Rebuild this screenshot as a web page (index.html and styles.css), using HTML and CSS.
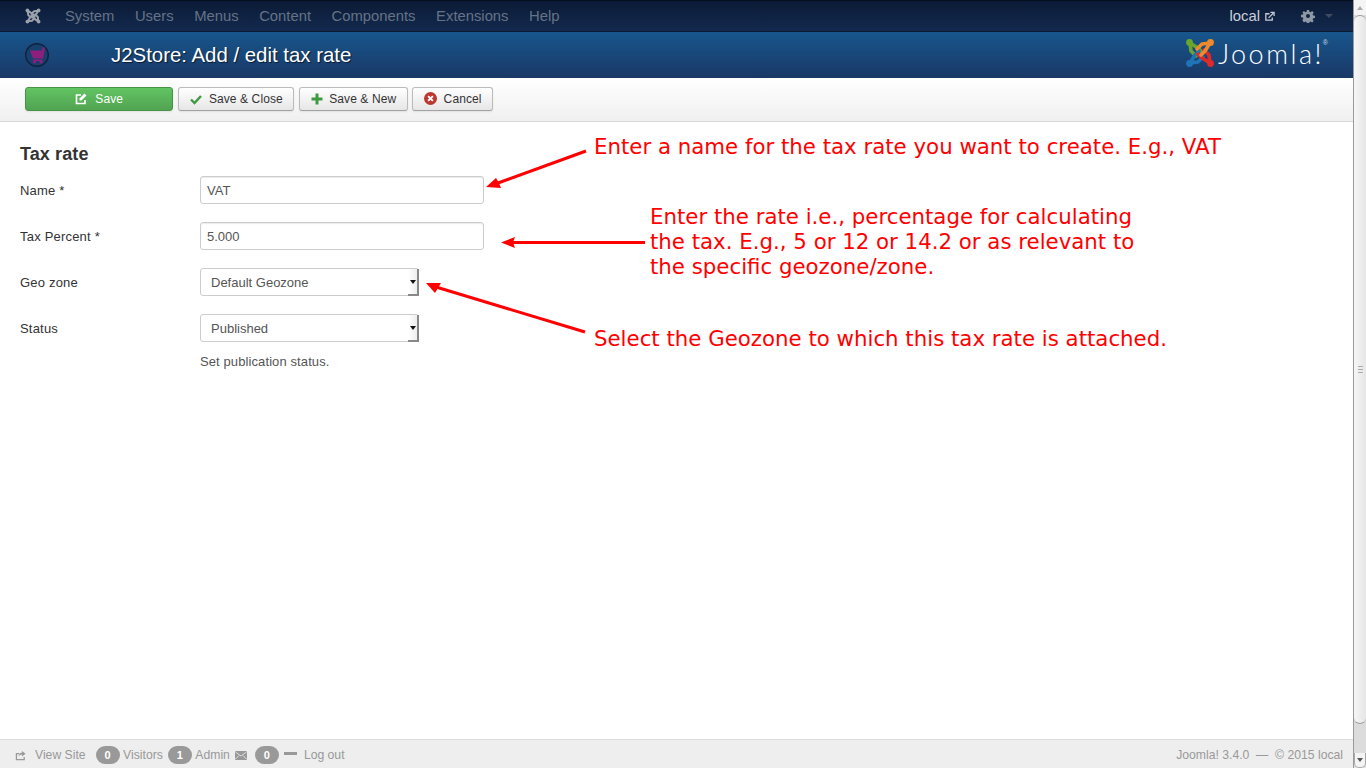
FILE: index.html
```html
<!DOCTYPE html>
<html lang="en">
<head>
<meta charset="utf-8">
<title>J2Store: Add / edit tax rate</title>
<link rel="stylesheet" href="styles.css">
</head>
<body>
<div class="app">
  <div class="main">
    <nav class="navbar">
      <svg class="brand" viewBox="0 0 30 30" width="16" height="16"><g fill="none" stroke="#9aa1ab" stroke-width="3.800" stroke-linecap="round" stroke-linejoin="round"><path d="M11 18 6 13 5 5 13 10 17 14"/><path d="M12 11 17 6 25 5 20 13 16 17"/><path d="M19 12 24 17 25 25 17 20 13 16"/><path d="M18 19 13 24 5 25 10 17 14 13"/></g><g fill="#9aa1ab"><circle cx="4.500" cy="4.500" r="3.500"/><circle cx="25.500" cy="4.500" r="3.500"/><circle cx="25.500" cy="25.500" r="3.500"/><circle cx="4.500" cy="25.500" r="3.500"/></g></svg>
      <ul class="menu">
        <li>System</li><li>Users</li><li>Menus</li><li>Content</li><li>Components</li><li>Extensions</li><li>Help</li>
      </ul>
      <div class="nav-right">
        <span class="local">local</span>
        <svg class="ext" viewBox="0 0 12 12" width="11" height="11"><path d="M9 7v3H2V3h4" fill="none" stroke="#c5ccd6" stroke-width="1.400"/><path d="M5 7.500 10 2.500M7 1.500h4v4" fill="none" stroke="#c5ccd6" stroke-width="1.400"/></svg>
        <svg class="gear" viewBox="-1 0 16 14" width="14" height="14"><path fill-rule="evenodd" fill="#8f98a5" d="M5.700 0h2.600l.3 2 1.400.6L11.700 1.400l1.800 1.800-1.200 1.700.6 1.400 2.100.4v2.600l-2.100.3-.6 1.400 1.200 1.700-1.800 1.800-1.700-1.200-1.400.6-.3 2.100H5.700l-.3-2.100-1.400-.6-1.700 1.200L.5 11.700l1.200-1.700-.6-1.400L-1 8.300V5.700l2.100-.3.600-1.400L.5 3.200l1.800-1.800L4 2.600l1.400-.6zM7 4.700a2.300 2.300 0 1 0 0 4.600 2.300 2.300 0 0 0 0-4.600z"/></svg>
        <span class="caret"></span>
      </div>
    </nav>
    <header class="head">
      <svg class="cart-badge" viewBox="0 0 24 24" width="24" height="24"><circle cx="12" cy="12" r="11.300" fill="#17406e" stroke="#10223c" stroke-width="1.400"/><path fill="#8e1f7c" d="M5 7.500h12l.6-3H20l-2 11H8zM8 16.500h9.500V18H8z"/><circle cx="9.500" cy="19" r="1.600" fill="#8e1f7c"/><circle cx="16" cy="19" r="1.600" fill="#8e1f7c"/></svg>
      <h1 class="title">J2Store: Add / edit tax rate</h1>
      <div class="logo">
        <svg viewBox="0 0 30 30" width="30" height="30"><g fill="none" stroke-width="3.600" stroke-linecap="round" stroke-linejoin="round"><path stroke="#6aa62c" d="M11 18 6 13 5 5 13 10 17 14"/><path stroke="#1f73b7" d="M18 19 13 24 5 25 10 17 14 13"/><path stroke="#e02a2a" d="M19 12 24 17 25 25 17 20 13 16"/><path stroke="#ef8a2c" d="M12 11 17 6 25 5 20 13 16 17"/></g><circle cx="4.500" cy="4.500" r="3.400" fill="#6aa62c"/><circle cx="25.500" cy="4.500" r="3.400" fill="#ef8a2c"/><circle cx="25.500" cy="25.500" r="3.400" fill="#e02a2a"/><circle cx="4.500" cy="25.500" r="3.400" fill="#1f73b7"/></svg>
        <span class="logo-text">Joomla!</span><span class="reg">®</span>
      </div>
    </header>
    <div class="toolbar">
      <button class="btn btn-save"><svg viewBox="0 0 12 12" width="12" height="12"><path d="M10 7v3.500H1.500V2H6" fill="none" stroke="#fff" stroke-width="1.600"/><path d="M4.500 5.500 9.500.500 11.500 2.500 6.500 7.500H4.500z" fill="#fff"/></svg><span>Save</span></button>
      <button class="btn"><svg viewBox="0 0 12 12" width="12" height="12"><path d="M1 6.500 4.500 10 11 3" fill="none" stroke="#3f9a42" stroke-width="2.400"/></svg><span>Save &amp; Close</span></button>
      <button class="btn"><svg viewBox="0 0 12 12" width="12" height="12"><path d="M6 .500v11M.500 6h11" fill="none" stroke="#3f9a42" stroke-width="3"/></svg><span>Save &amp; New</span></button>
      <button class="btn"><svg viewBox="0 0 12 12" width="13" height="13"><circle cx="6" cy="6" r="6" fill="#bd362f"/><path d="M3.800 3.800 8.200 8.200M8.200 3.800 3.800 8.200" stroke="#fff" stroke-width="1.800"/></svg><span>Cancel</span></button>
    </div>
    <section class="content">
      <h2 class="legend">Tax rate</h2>
      <div class="row"><label class="lbl">Name *</label><div class="input">VAT</div></div>
      <div class="row"><label class="lbl">Tax Percent *</label><div class="input">5.000</div></div>
      <div class="row"><label class="lbl">Geo zone</label><div class="select">Default Geozone<span class="sel-btn"></span></div></div>
      <div class="row row-last"><label class="lbl">Status</label><div class="select">Published<span class="sel-btn"></span></div></div>
      <p class="help">Set publication status.</p>

      <div class="note note-1">Enter a name for the tax rate you want to create. E.g., VAT</div>
      <div class="note note-2">Enter the rate i.e., percentage for calculating<br>the tax. E.g., 5 or 12 or 14.2 or as relevant to<br>the specific geozone/zone.</div>
      <div class="note note-3">Select the Geozone to which this tax rate is attached.</div>
      <svg class="arrows" viewBox="0 0 700 260" width="700" height="260">
        <g stroke="#f00" stroke-width="3" fill="#f00">
          <path d="M166 29 L78 61" fill="none"/>
          <path d="M66 65 L76 56 L79 61 L81 66 Z" stroke="none"/>
          <path d="M225 120.500 H90" fill="none"/>
          <path d="M81 120.500 L95 115 L93 120.500 L95 126 Z" stroke="none"/>
          <path d="M165 210 L16 165" fill="none"/>
          <path d="M6 161 L21 161 L18 166 L15 171 Z" stroke="none"/>
        </g>
      </svg>
    </section>
    <footer class="foot">
      <svg class="f-ic" viewBox="0 0 12 12" width="12" height="11"><path d="M9.500 7.500V10.500H1V4H4" fill="none" stroke="#999" stroke-width="1.400"/><path d="M7 1v2C4.500 3 3.500 4.500 3.500 7 4.500 5.500 5.500 5 7 5v2l4-3z" fill="#999"/></svg>
      <span class="f-link f-view">View Site</span>
      <span class="badge">0</span><span class="f-link">Visitors</span>
      <span class="badge">1</span><span class="f-link">Admin</span>
      <svg class="f-mail" viewBox="0 0 12 9" width="12" height="9"><rect width="12" height="9" rx="1" fill="#999"/><path d="M.5 1 6 5l5.500-4M.5 8 4 4.500M11.500 8 8 4.500" fill="none" stroke="#eee" stroke-width=".8"/></svg>
      <span class="badge">0</span>
      <span class="f-dash"></span>
      <span class="f-link f-out">Log out</span>
      <span class="f-copy">Joomla! 3.4.0 &nbsp;— &nbsp;© 2015 local</span>
    </footer>
  </div>
  <aside class="scrollbar">
    <div class="sb-btn sb-up"><span class="up"></span></div>
    <div class="sb-track"><div class="sb-thumb"><span class="grip"></span></div></div>
    <div class="sb-btn sb-down"><span class="down"></span></div>
  </aside>
</div>
</body>
</html>
```
FILE: styles.css
```css
* { box-sizing: border-box; }
html, body { margin: 0; height: 100%; overflow: hidden; }
body { font-family: "Liberation Sans", Arial, sans-serif; font-size: 13px; color: #333; background: #fff; }
.app { display: flex; height: 768px; }
.main { flex: 1; min-width: 0; display: flex; flex-direction: column; }

.navbar { height: 32px; display: flex; align-items: center; padding: 0 16px 0 25px; background: linear-gradient(#0b1b36, #13294e); border-top: 1px solid #05101f; border-bottom: 1px solid #0c1b33; }
.brand { display: block; flex: none; }
.menu { list-style: none; margin: 0 0 0 24px; padding: 0; display: flex; gap: 20.600px; font-size: 14.800px; color: #667387; }
.nav-right { margin-left: auto; display: flex; align-items: center; color: #c9d0da; font-size: 14.800px; }
.ext { margin-left: 4px; }
.gear { margin-left: 26px; }
.caret { margin-left: 10px; margin-right: 4px; border: 4px solid transparent; border-top-color: #3f4c60; border-bottom: 0; }

.head { height: 46px; display: flex; align-items: center; padding: 0 25px; background: linear-gradient(#17568c, #1a3867); position: relative; }
.cart-badge { display: block; flex: none; }
.title { margin: 0 0 0 62px; font-size: 20.400px; font-weight: 400; color: #fff; text-shadow: 1px 1px 1px rgba(0,0,0,.6); }
.logo { margin-left: auto; display: flex; align-items: center; color: #fff; margin-top: -4px; }
.logo svg { display: block; margin-right: 3px; }
.logo-text { font-family: Lato, sans-serif; font-weight: 300; font-size: 27px; letter-spacing: 2.500px; }
.reg { font-size: 7px; align-self: flex-start; color: #cfd8e3; margin: 2px 0 0 -1px; }

.toolbar { height: 44px; display: flex; align-items: center; gap: 4.400px; padding: 0 25px 2px; background: linear-gradient(#fff, #f0f0f0); border-bottom: 1px solid #d8d8d8; }
.btn { height: 24px; padding: 0 10.500px 0 11px; display: flex; align-items: center; justify-content: center; gap: 6.500px; font-family: inherit; font-size: 12px; letter-spacing: .1px; color: #333; background: linear-gradient(#fff, #e6e6e6); border: 1px solid #bbb; border-bottom-color: #a2a2a2; border-radius: 3px; box-shadow: 0 1px 2px rgba(0,0,0,.08); }
.btn svg { display: block; flex: none; }
.btn-save { width: 148px; margin-right: 1px; color: #fff; background: linear-gradient(#62c462, #51a351); border-color: #479447; gap: 8px; }

.content { flex: 1; padding: 22px 20px 0; position: relative; }
.legend { margin: 0 0 12px; font-size: 18px; letter-spacing: .1px; line-height: 20px; font-weight: 700; color: #333; }
.row { display: flex; align-items: center; height: 28px; margin-bottom: 18px; }
.row-last { margin-bottom: 0; }
.lbl { width: 180px; font-size: 13px; letter-spacing: .2px; color: #333; }
.input { width: 284px; height: 28px; padding: 0 6px; display: flex; align-items: center; font-size: 13px; color: #555; background: #fff; border: 1px solid #ccc; border-radius: 3px; box-shadow: inset 0 1px 1px rgba(0,0,0,.08); }
.select { width: 219px; height: 28px; padding: 0 10px; display: flex; align-items: center; position: relative; font-size: 13px; color: #555; background: #fff; border: 1px solid #ccc; border-radius: 3px; }
.sel-btn { position: absolute; right: -1px; top: 0; bottom: -1px; width: 11px; background: linear-gradient(90deg, #fff, #eee); border-right: 2px solid #888; border-bottom: 2px solid #888; }
.sel-btn::after { content: ""; position: absolute; left: 2px; top: 11px; border: 3px solid transparent; border-top: 4px solid #111; border-bottom: 0; }
.help { margin: 12px 0 0 180px; font-size: 13px; letter-spacing: .1px; line-height: 16px; color: #555; }

.note { position: absolute; font-family: "DejaVu Sans", sans-serif; font-size: 21.300px; line-height: 25px; color: #f00; white-space: nowrap; }
.note-1 { left: 594px; top: 12px; }
.note-2 { left: 650px; top: 82px; }
.note-3 { left: 594px; top: 204px; }
.arrows { position: absolute; left: 420px; top: 0; display: block; }

.foot { height: 29px; flex: none; display: flex; align-items: center; padding: 2px 10px 0 15px; background: #eee; border-top: 1px solid #ddd; font-size: 12.200px; color: #999; }
.f-ic { margin-right: 8px; }
.badge { width: 24px; height: 18px; margin-right: 3.500px; border-radius: 9px; background: #999; color: #fff; font-size: 11px; font-weight: 700; display: flex; align-items: center; justify-content: center; }
.f-link { margin-right: 5px; }
.f-view { margin-right: 10px; }
.f-mail { margin: 0 8px 0 0; }
.f-dash { width: 13px; height: 3px; background: #999; margin: -4px 7px 0 1.500px; }
.f-copy { margin-left: auto; }

.scrollbar { width: 13px; flex: none; display: flex; flex-direction: column; background: #e4e4e4; border-left: 1px solid #9a9a9a; }
.sb-btn { height: 15px; flex: none; display: flex; align-items: center; justify-content: center; background: #f4f4f4; }
.sb-down { border-radius: 0 0 5px 5px; border: 1px solid #aaa; border-top: 0; }
.up { border: 3px solid transparent; border-bottom: 4px solid #aaa; border-top: 0; }
.down { border: 3px solid transparent; border-top: 4px solid #555; border-bottom: 0; }
.sb-track { flex: 1; background: #dcdcdc; padding-bottom: 29px; }
.sb-thumb { height: 100%; background: linear-gradient(90deg, #f6f6f6, #e6e6e6); border: 1px solid #999; border-left: 0; border-right: 0; border-radius: 6px; display: flex; align-items: center; justify-content: center; }
.grip { width: 5px; height: 7px; border-top: 1px solid #aaa; border-bottom: 1px solid #aaa; background: linear-gradient(#aaa, #aaa) center / 100% 1px no-repeat; }
```
